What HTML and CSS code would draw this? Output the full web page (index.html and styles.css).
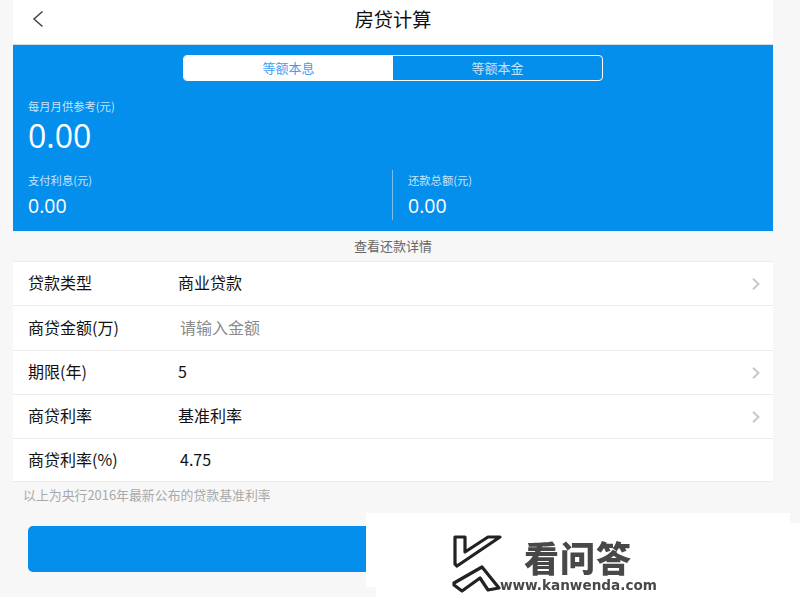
FILE: index.html
```html
<!DOCTYPE html>
<html lang="zh">
<head>
<meta charset="utf-8">
<title>房贷计算</title>
<link rel="stylesheet" href="styles.css">
</head>
<body>
<main class="page">
  <header class="nav">
    <svg class="back" width="12" height="18" viewBox="0 0 12 18"><path d="M10.5 1.5 2 9l8.5 7.5" fill="none" stroke="#444" stroke-width="1.5"/></svg>
    <h1 class="title">房贷计算</h1>
  </header>
  <section class="hero">
    <div class="tabs">
      <div class="tab tab-on">等额本息</div>
      <div class="tab">等额本金</div>
    </div>
    <div class="hero-label hero-label-main">每月月供参考(元)</div>
    <div class="hero-big">0.00</div>
    <div class="hero-split">
      <div class="hero-col">
        <div class="hero-label">支付利息(元)</div>
        <div class="hero-mid">0.00</div>
      </div>
      <div class="hero-col hero-col-right">
        <div class="hero-label">还款总额(元)</div>
        <div class="hero-mid">0.00</div>
      </div>
    </div>
  </section>
  <div class="detail">查看还款详情</div>
  <section class="form">
    <div class="row row-a"><span class="key">贷款类型</span><span class="val">商业贷款</span><svg class="chev" width="8" height="12" viewBox="0 0 8 12"><path d="M1 .8 6.5 6 1 11.2" fill="none" stroke="#c8c8c8" stroke-width="2"/></svg></div>
    <div class="row row-b"><span class="key">商贷金额(万)</span><span class="val val-input hint">请输入金额</span></div>
    <div class="row row-a"><span class="key">期限(年)</span><span class="val">5</span><svg class="chev" width="8" height="12" viewBox="0 0 8 12"><path d="M1 .8 6.5 6 1 11.2" fill="none" stroke="#c8c8c8" stroke-width="2"/></svg></div>
    <div class="row row-a"><span class="key">商贷利率</span><span class="val">基准利率</span><svg class="chev" width="8" height="12" viewBox="0 0 8 12"><path d="M1 .8 6.5 6 1 11.2" fill="none" stroke="#c8c8c8" stroke-width="2"/></svg></div>
    <div class="row row-c"><span class="key">商贷利率(%)</span><span class="val val-input">4.75</span></div>
  </section>
  <p class="note">以上为央行2016年最新公布的贷款基准利率</p>
  <div class="submit"></div>
</main>
<aside class="mark">
  <div class="mark-back"></div>
  <div class="mark-front">
    <svg class="mark-k" width="52" height="66" viewBox="0 0 52 66">
      <path d="M4 8h10v15L37 8h12L6 37l-2-2z" fill="#fff" stroke="#222" stroke-width="3.2" stroke-linejoin="round"/>
      <path d="M3 54 31 38l17 21-11 2-8-12-18 13-8-6z" fill="#fff" stroke="#222" stroke-width="3.2" stroke-linejoin="round"/>
    </svg>
    <div class="mark-name">看问答</div>
    <div class="mark-url">www.kanwenda.com</div>
  </div>
</aside>
</body>
</html>
```
FILE: styles.css
```css
* { box-sizing: border-box; }
html, body { margin: 0; height: 597px; overflow: hidden; }
body {
  background: #f7f7f7;
  font-family: "Noto Sans CJK SC", "Open Sans", sans-serif;
  color: #111;
  position: relative;
}
.page { width: 760px; margin-left: 13px; }
.nav {
  height: 45px;
  background: #fff;
  border-bottom: 1px solid #d9d9d9;
  display: flex;
  align-items: center;
  justify-content: center;
  position: relative;
}
.back { position: absolute; left: 19px; top: 10px; }
.title { margin: 0 0 6px; font-size: 19.2px; font-weight: 400; line-height: 28px; }
.hero {
  height: 186px;
  background: #058fec;
  padding: 10px 15px 0;
  color: #fff;
  display: flex;
  flex-direction: column;
}
.tabs {
  width: 420px;
  height: 26px;
  margin-left: 155px;
  border: 1px solid #fff;
  border-radius: 4px;
  display: flex;
  overflow: hidden;
  flex: none;
}
.tab {
  flex: 1;
  text-align: center;
  font-size: 13px;
  line-height: 23px;
  color: #c4e3f8;
}
.tab-on { background: #fff; color: #3d9fee; }
.hero-label { font-size: 11.3px; line-height: 16px; color: #c8e4f8; }
.hero-label-main { margin-top: 17px; }
.hero-big { font-size: 32px; line-height: 44px; font-family: "Open Sans", sans-serif; }
.hero-split { display: flex; margin-top: 12px; }
.hero-col { flex: 0 0 364px; height: 50px; }
.hero-col-right { flex: 1; border-left: 1px solid #7cbdea; padding-left: 15px; }
.hero-mid { font-size: 19.5px; line-height: 26px; margin-top: 5px; font-family: "Open Sans", sans-serif; font-weight: 500; }
.hero-split .hero-label { margin-top: 2px; }
.detail {
  height: 30px;
  font-size: 13px;
  line-height: 29px;
  text-align: center;
  color: #666;
}
.form { background: #fff; border-top: 1px solid #ececec; }
.row {
  display: flex;
  align-items: center;
  padding-left: 15px;
  padding-bottom: 2px;
  border-bottom: 1px solid #ececec;
  font-size: 16px;
}
.row-a { height: 44px; padding-bottom: 4px; }
.row-b { height: 45px; }
.row-c { height: 43px; }
.key { width: 150px; flex: none; }
.val { flex: 1; }
.val-input { padding-left: 2px; }
.hint { color: #8a8a8a; }
.chev { margin: 4px 13px 0 0; flex: none; }
.note { margin: 0; padding-left: 10px; font-size: 12.9px; line-height: 26px; color: #a9a9a9; }
.submit {
  height: 46px;
  margin: 18px 15px 0;
  background: #058fec;
  border-radius: 5px;
}
.mark-back { position: absolute; left: 366px; top: 513px; width: 424px; height: 74px; background: #fff; }
.mark-front { position: absolute; left: 376px; top: 523px; width: 424px; height: 74px; background: #fff; }
.mark-k { position: absolute; left: 75px; top: 6px; filter: blur(.7px); }
.mark-name {
  position: absolute;
  left: 148px;
  top: 14px;
  font-size: 35px;
  line-height: 40px;
  letter-spacing: 1px;
  font-weight: 900;
  color: #484848;
  filter: blur(.5px);
}
.mark-url {
  position: absolute;
  left: 124px;
  top: 54px;
  font-family: "DejaVu Sans", sans-serif;
  font-size: 13.6px;
  line-height: 16px;
  font-weight: 700;
  color: #484848;
  filter: blur(.4px);
}
```
